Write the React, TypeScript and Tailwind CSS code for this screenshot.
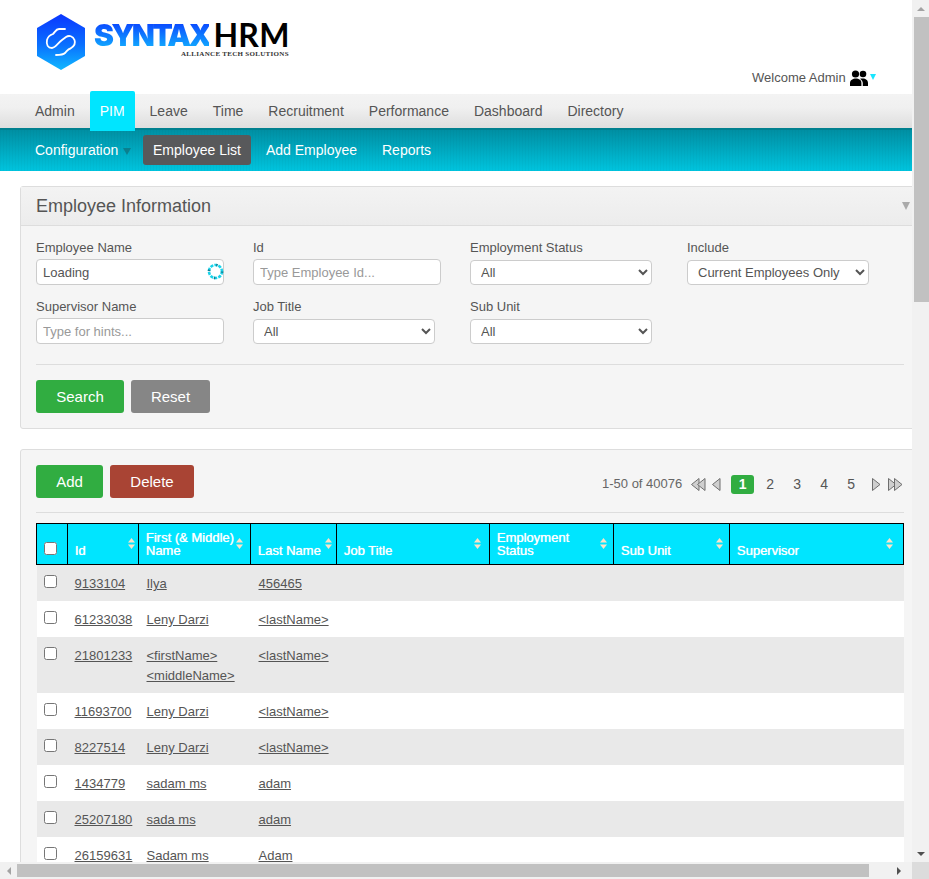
const navItems = ["Admin", "PIM", "Leave", "Time", "Recruitment", "Performance", "Dashboard", "Directory"];

const rows = [
  { id: "9133104", first: ["Ilya"], last: "456465" },
  { id: "61233038", first: ["Leny Darzi"], last: "<lastName>" },
  { id: "21801233", first: ["<firstName>", "<middleName>"], last: "<lastName>" },
  { id: "11693700", first: ["Leny Darzi"], last: "<lastName>" },
  { id: "8227514", first: ["Leny Darzi"], last: "<lastName>" },
  { id: "1434779", first: ["sadam ms"], last: "adam" },
  { id: "25207180", first: ["sada ms"], last: "adam" },
  { id: "26159631", first: ["Sadam ms"], last: "Adam" },
];

const headers = [
  { label: "Id", w: "w-[71px]", sort: "right-[2px]" },
  { label: "First (& Middle) Name", w: "w-[112px]", sort: "right-[6px]" },
  { label: "Last Name", w: "w-[86px]", sort: "right-[3px]" },
  { label: "Job Title", w: "w-[153px]", sort: "right-[7px]" },
  { label: "Employment Status", w: "w-[124px]", sort: "right-[5px]" },
  { label: "Sub Unit", w: "w-[116px]", sort: "right-[5px]" },
  { label: "Supervisor", w: "w-[174px]", sort: "right-[9px]" },
];

function Sort({ pos }: { pos: string }) {
  return (
    <svg width="9" height="11" viewBox="0 0 9 11" className={`absolute top-[14px] ${pos}`}>
      <path d="M4.5 0 L8 4.5 H1 Z" fill="#fde3c8" />
      <path d="M1 6.5 H8 L4.5 11 Z" fill="#fde3c8" />
    </svg>
  );
}

function PagerIcon({ dir, double }: { dir: "l" | "r"; double?: boolean }) {
  const one = (x: number, key: number) =>
    dir === "l" ? (
      <path key={key} d={`M${x + 7.5} 0.5 V12.5 L${x} 6.5 Z`} fill="#cfcfcf" stroke="#6e6e6e" strokeWidth="1" />
    ) : (
      <path key={key} d={`M${x} 0.5 V12.5 L${x + 7.5} 6.5 Z`} fill="#cfcfcf" stroke="#6e6e6e" strokeWidth="1" />
    );
  return (
    <svg width={double ? 15 : 9} height="13" viewBox={`0 0 ${double ? 15 : 9} 13`} className="block shrink-0">
      {double ? [one(0.5, 0), one(6.5, 1)] : one(0.5, 0)}
    </svg>
  );
}

function Spinner() {
  return (
    <svg width="17" height="17" viewBox="0 0 17 17" className="absolute right-0 top-[4px]">
      <circle cx="8.5" cy="8.5" r="6.5" fill="none" stroke="#19d3ea" strokeWidth="2.6" strokeDasharray="3 1.1" />
      <circle cx="8.5" cy="8.5" r="6.5" fill="none" stroke="#0e7f93" strokeWidth="2.6" strokeDasharray="1.4 8.8" />
    </svg>
  );
}

function People() {
  return (
    <svg width="18" height="16" viewBox="0 0 18 16" className="ml-[4px] shrink-0">
      <circle cx="5.5" cy="4" r="3.6" fill="#000" />
      <circle cx="13" cy="4" r="3.3" fill="#000" />
      <path d="M0 16 V13 C0 10 3 8.5 5.8 8.5 C9 8.5 11.4 10 11.4 13 V16 Z" fill="#000" />
      <path d="M10 8.7 C11 8.5 12 8.5 13 8.5 C15.5 8.5 18 10 18 13 V16 H12.8 V13 C12.8 11.5 11.8 9.8 10 8.7 Z" fill="#000" />
    </svg>
  );
}

const inputCls =
  "w-[188px] h-[26px] rounded-[4px] border border-[#ccc] bg-white px-[6px] text-[13px] text-[#555] placeholder:text-[#999] outline-none";
const selectCls =
  "w-[182px] h-[25px] rounded-[4px] border border-[#ccc] bg-white pl-[6px] text-[13px] text-[#555] outline-none";
const labelCls = "block h-[21px] leading-[21px] text-[13px] text-[#555]";

export default function App() {
  return (
    <div className="flex h-[879px] w-[929px] flex-col overflow-hidden font-['Liberation_Sans',Arial,sans-serif] text-[13px] text-[#555]">
      <div className="flex h-[862px] overflow-hidden">
        <div className="w-[912px] shrink-0 overflow-hidden bg-white">
          {/* header */}
          <header className="relative h-[94px] bg-white">
            <div className="flex h-full items-start pl-[36px] pt-[14px]">
              <svg width="50" height="56" viewBox="0 0 50 56" className="shrink-0">
                <defs>
                  <linearGradient id="hex" x1="0" y1="0" x2="0" y2="1">
                    <stop offset="0" stopColor="#0a36ff" />
                    <stop offset="0.55" stopColor="#0a70ff" />
                    <stop offset="1" stopColor="#10b8ff" />
                  </linearGradient>
                </defs>
                <path d="M25 0 L49 14 V42 L25 56 L1 42 V14 Z" fill="url(#hex)" />
                <path
                  d="M29 15 H23 C20 15 19 18 17 20 C14 21 12 22 11 26 C10 31 12 34 16 34 C19 34 22 29 26 26 L30 23 C33 21 37 22 38.5 26 C40 30 37 33 34.5 34.5 C32 35 31 37 29 39 C27 41 24 41 20 41"
                  fill="none"
                  stroke="#fff"
                  strokeWidth="1.8"
                  strokeLinecap="round"
                />
              </svg>
              <div className="relative ml-[8px] mt-[5px] h-[44px] w-[200px]">
                <div className="flex h-[32px] items-center leading-none">
                  <span className="bg-[linear-gradient(180deg,#0a3cff,#12b4ff)] bg-clip-text font-['Inter',sans-serif] text-[30px] font-black tracking-[-2.7px] text-transparent">
                    SYNTAX
                  </span>
                  <span className="ml-[4px] font-['Lato',sans-serif] text-[32px] font-bold tracking-[0.3px] text-black">HRM</span>
                </div>
                <div className="absolute left-[87px] top-[31px] whitespace-nowrap font-['Liberation_Serif',serif] text-[7px] font-bold leading-[9px] tracking-[0.3px] text-[#333]">
                  ALLIANCE TECH SOLUTIONS
                </div>
              </div>
            </div>
            <div className="absolute left-[752px] top-[69px] flex h-[18px] items-center">
              <span className="text-[13px] leading-[18px] text-[#555]">Welcome Admin</span>
              <People />
              <span className="mb-[3px] ml-[2px] h-0 w-0 border-x-[3px] border-t-[6px] border-x-transparent border-t-[#19e6ff]" />
            </div>
          </header>

          {/* nav */}
          <nav className="relative h-[34px] bg-[linear-gradient(180deg,#f3f3f3_0%,#f0f0f0_40%,#dedede_100%)] text-[14px]">
            <ul className="flex gap-[5px] pl-[25px]">
              {navItems.map((n) =>
                n === "PIM" ? (
                  <li key={n} className="relative z-10 -mt-[3px] h-[40px] rounded-t-[2px] bg-[#00e5ff] px-[10px] pt-[4px] leading-[33px] text-white">
                    {n}
                  </li>
                ) : (
                  <li key={n} className="px-[10px] leading-[34px] text-[#555]">
                    {n}
                  </li>
                )
              )}
            </ul>
          </nav>
          <div className="flex h-[43px] gap-[5px] border-t-2 border-[#00808f] bg-[repeating-linear-gradient(90deg,rgba(0,0,0,0.025)_0px,rgba(0,0,0,0.025)_1px,transparent_1px,transparent_3px),linear-gradient(180deg,#008fa3_0%,#00c4de_100%)] pl-[25px] pt-[5px] text-[14px] text-white">
            <div className="flex h-[30px] w-[113px] items-center px-[10px]">
              Configuration
              <span className="ml-[5px] mt-[2px] h-0 w-0 border-x-[4px] border-t-[7px] border-x-transparent border-t-[#0b7f8e]" />
            </div>
            <div className="h-[30px] rounded-[3px] bg-[#58595b] px-[10px] leading-[30px]">Employee List</div>
            <div className="h-[30px] px-[10px] leading-[30px]">Add Employee</div>
            <div className="h-[30px] px-[10px] leading-[30px]">Reports</div>
          </div>

          {/* search panel */}
          <section className="ml-[20px] mt-[15px] w-[900px] rounded-[3px] border border-[#ddd] bg-[#f5f5f5]">
            <div className="flex h-[39px] items-center justify-between border-b border-[#ddd] bg-[linear-gradient(180deg,#f3f3f3,#ececec)] pl-[15px] pr-[9px]">
              <h2 className="text-[18px] leading-none text-[#555]">Employee Information</h2>
              <span className="h-0 w-0 border-x-[4px] border-t-[8px] border-x-transparent border-t-[#aaa]" />
            </div>
            <div className="px-[15px] pt-[11px]">
              <div className="grid grid-cols-[repeat(4,217px)]">
                <div className="h-[59px]">
                  <label className={labelCls}>Employee Name</label>
                  <div className="relative mt-[1px] w-[188px]">
                    <input className={inputCls} defaultValue="Loading" />
                    <Spinner />
                  </div>
                </div>
                <div className="h-[59px]">
                  <label className={labelCls}>Id</label>
                  <input className={`${inputCls} mt-[1px]`} placeholder="Type Employee Id..." />
                </div>
                <div className="h-[59px]">
                  <label className={labelCls}>Employment Status</label>
                  <select className={`${selectCls} mt-[2px]`}>
                    <option>All</option>
                  </select>
                </div>
                <div className="h-[59px]">
                  <label className={labelCls}>Include</label>
                  <select className={`${selectCls} mt-[2px]`}>
                    <option>Current Employees Only</option>
                  </select>
                </div>
                <div className="h-[59px]">
                  <label className={labelCls}>Supervisor Name</label>
                  <input className={`${inputCls} mt-[1px]`} placeholder="Type for hints..." />
                </div>
                <div className="h-[59px]">
                  <label className={labelCls}>Job Title</label>
                  <select className={`${selectCls} mt-[2px]`}>
                    <option>All</option>
                  </select>
                </div>
                <div className="h-[59px]">
                  <label className={labelCls}>Sub Unit</label>
                  <select className={`${selectCls} mt-[2px]`}>
                    <option>All</option>
                  </select>
                </div>
              </div>
              <div className="mt-[9px] w-[868px] border-t border-[#ddd]" />
              <div className="flex gap-[7px] py-[15px]">
                <button className="h-[33px] w-[88px] rounded-[3px] bg-[#31ad41] pt-px text-[15px] text-white">Search</button>
                <button className="h-[33px] w-[79px] rounded-[3px] bg-[#868686] pt-px text-[15px] text-white">Reset</button>
              </div>
            </div>
          </section>

          {/* list panel */}
          <section className="ml-[20px] mt-[20px] w-[900px] rounded-[3px] border border-[#ddd] bg-[#f5f5f5] px-[15px] pt-[15px]">
            <div className="flex h-[33px] items-center justify-between">
              <div className="flex gap-[7px]">
                <button className="h-[33px] w-[67px] rounded-[3px] bg-[#31ad41] pt-px text-[15px] text-white">Add</button>
                <button className="h-[33px] w-[84px] rounded-[3px] bg-[#a94434] pt-px text-[15px] text-white">Delete</button>
              </div>
              <div className="mt-[5px] flex w-[302px] items-center text-[14px]">
                <span className="mr-[9px] whitespace-nowrap text-[13px] text-[#666]">1-50 of 40076</span>
                <PagerIcon dir="l" double />
                <span className="ml-[6px]">
                  <PagerIcon dir="l" />
                </span>
                <span className="ml-[10px] h-[19px] w-[23px] rounded-[3px] bg-[#31ad41] text-center font-bold leading-[19px] text-white">1</span>
                <span className="ml-[12px] w-[8px]">2</span>
                <span className="ml-[19px] w-[8px]">3</span>
                <span className="ml-[19px] w-[8px]">4</span>
                <span className="ml-[19px] w-[8px]">5</span>
                <span className="ml-[17px]">
                  <PagerIcon dir="r" />
                </span>
                <span className="ml-[7px]">
                  <PagerIcon dir="r" double />
                </span>
              </div>
            </div>
            <div className="mt-[14px] w-[868px] border-t border-[#ddd]" />
            <table className="mt-[10px] w-[867px] table-fixed border-collapse">
              <thead>
                <tr className="h-[41px] bg-[#00e5ff] text-white">
                  <th className="w-[31px] border border-black p-0 pl-[7px] align-bottom">
                    <div className="flex h-[22px] items-start">
                      <input type="checkbox" className="m-0 h-[13px] w-[13px]" />
                    </div>
                  </th>
                  {headers.map((h) => (
                    <th
                      key={h.label}
                      className={`${h.w} relative border border-black px-[7px] pb-[7px] text-left align-bottom text-[13px] font-normal leading-[13px] [text-shadow:0_0_0.7px_#fff]`}
                    >
                      {h.label}
                      <Sort pos={h.sort} />
                    </th>
                  ))}
                </tr>
              </thead>
              <tbody>
                {rows.map((r, i) => (
                  <tr key={r.id} className={i % 2 === 0 ? "bg-[#e9e9e9]" : "bg-white"}>
                    <td className="h-[36px] p-0 pl-[7px] pt-[10px] align-top">
                      <div className="flex h-[16px] items-start">
                        <input type="checkbox" className="m-0 h-[13px] w-[13px]" />
                      </div>
                    </td>
                    <td className="px-[7px] pb-[7px] pt-[9px] align-top leading-[20px]">
                      <a className="underline">{r.id}</a>
                    </td>
                    <td className="px-[8px] pb-[7px] pt-[9px] align-top leading-[20px]">
                      {r.first.map((f) => (
                        <div key={f}>
                          <a className="underline">{f}</a>
                        </div>
                      ))}
                    </td>
                    <td className="px-[8px] pb-[7px] pt-[9px] align-top leading-[20px]">
                      <a className="underline">{r.last}</a>
                    </td>
                    <td />
                    <td />
                    <td />
                    <td />
                  </tr>
                ))}
              </tbody>
            </table>
          </section>
        </div>

        {/* vertical scrollbar */}
        <div className="flex w-[17px] shrink-0 flex-col bg-[#f1f1f1]">
          <div className="flex h-[17px] items-center justify-center">
            <span className="h-0 w-0 border-x-[4px] border-b-[4px] border-x-transparent border-b-[#a3a3a3]" />
          </div>
          <div className="ml-[2px] h-[285px] w-[15px] bg-[#c1c1c1]" />
          <div className="flex-1" />
          <div className="flex h-[17px] items-center justify-center">
            <span className="h-0 w-0 border-x-[4px] border-t-[4px] border-x-transparent border-t-[#505050]" />
          </div>
        </div>
      </div>

      {/* horizontal scrollbar */}
      <div className="flex h-[17px] shrink-0 bg-[#f1f1f1]">
        <div className="flex h-full w-[17px] items-center justify-center">
          <span className="h-0 w-0 border-y-[4px] border-r-[4px] border-y-transparent border-r-[#a3a3a3]" />
        </div>
        <div className="mt-[2px] h-[13px] w-[852px] bg-[#c1c1c1]" />
        <div className="flex-1" />
        <div className="flex h-full w-[26px] items-center justify-center">
          <span className="h-0 w-0 border-y-[4px] border-l-[4px] border-y-transparent border-l-[#505050]" />
        </div>
        <div className="h-full w-[17px] bg-[#dcdcdc]" />
      </div>
    </div>
  );
}
